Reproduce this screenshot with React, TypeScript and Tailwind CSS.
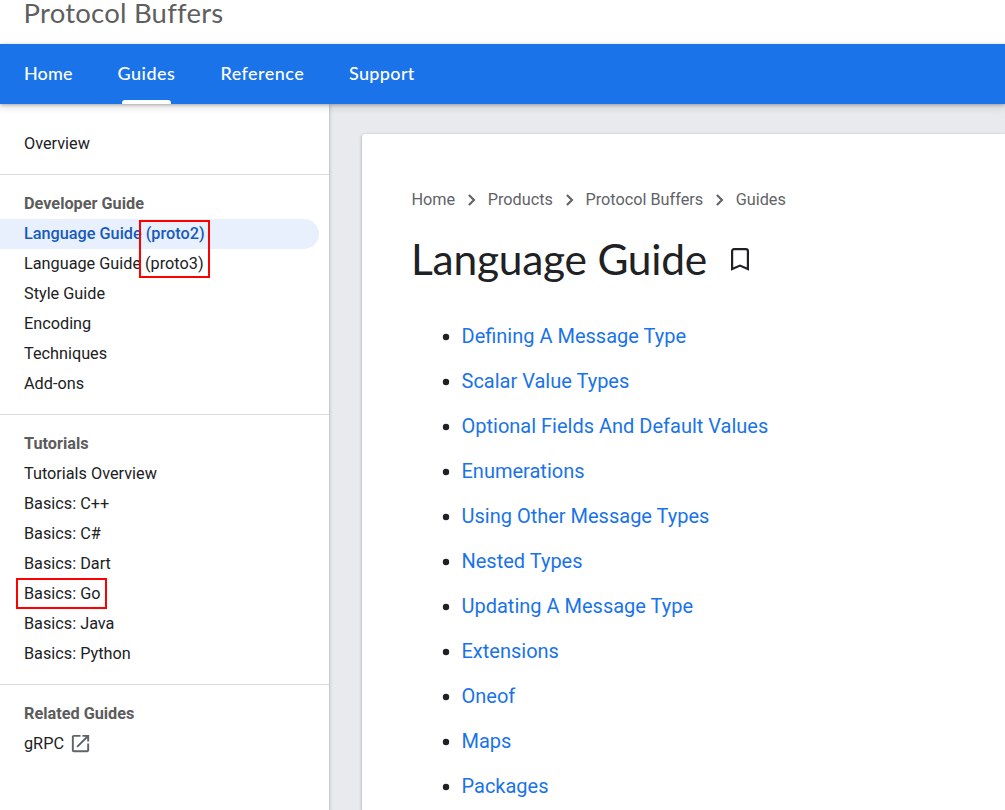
import React from "react";

type NavItem = { label: string; active?: boolean; external?: boolean; marked?: boolean };
type Section = { title?: string; items: NavItem[] };

const tabs = [
  { label: "Home", box: "w-[93.5px]", text: "tracking-[0.1px]" },
  { label: "Guides", box: "w-[103px]", text: "tracking-[0.5px]", active: true },
  { label: "Reference", box: "w-[128.5px]", text: "tracking-[0.45px]" },
  { label: "Support", box: "w-[110px]", text: "tracking-[0.35px]" },
];

const sections: Section[] = [
  { items: [{ label: "Overview" }] },
  {
    title: "Developer Guide",
    items: [
      { label: "Language Guide (proto2)", active: true },
      { label: "Language Guide (proto3)" },
      { label: "Style Guide" },
      { label: "Encoding" },
      { label: "Techniques" },
      { label: "Add-ons" },
    ],
  },
  {
    title: "Tutorials",
    items: [
      { label: "Tutorials Overview" },
      { label: "Basics: C++" },
      { label: "Basics: C#" },
      { label: "Basics: Dart" },
      { label: "Basics: Go", marked: true },
      { label: "Basics: Java" },
      { label: "Basics: Python" },
    ],
  },
  { title: "Related Guides", items: [{ label: "gRPC", external: true }] },
];

const crumbs = ["Home", "Products", "Protocol Buffers", "Guides"];

const topics = [
  "Defining A Message Type",
  "Scalar Value Types",
  "Optional Fields And Default Values",
  "Enumerations",
  "Using Other Message Types",
  "Nested Types",
  "Updating A Message Type",
  "Extensions",
  "Oneof",
  "Maps",
  "Packages",
];

function Header() {
  return (
    <header className="relative z-10 shrink-0 font-['Lato',sans-serif]">
      <div className="flex h-[44px] items-start bg-white pl-[23.5px]">
        <span className="text-[27.5px] leading-[26px] tracking-[0.22px] whitespace-nowrap text-[#5f5f5f]">Protocol Buffers</span>
      </div>
      <nav className="flex h-[60px] bg-[#1a73e8] pl-[1px] shadow-[0_1px_3px_rgba(60,64,67,0.35),0_3px_8px_rgba(60,64,67,0.18)]">
        {tabs.map((t) => (
          <a key={t.label} className={`relative flex items-center pb-[2px] pl-[23px] text-[18px] font-medium text-white ${t.box}`}>
            <span className={t.text}>{t.label}</span>
            {t.active && <span className="absolute bottom-0 left-[27.5px] h-1 w-[49px] rounded-t-[3px] bg-white" />}
          </a>
        ))}
      </nav>
    </header>
  );
}

function Row({ item }: { item: NavItem }) {
  return (
    <li
      className={`relative mr-[10px] flex h-[30px] items-center pl-6 ${
        item.active ? "rounded-r-full bg-[#e8f0fe] font-medium text-[#185abc]" : "text-[#202124]"
      }`}
    >
      <a>{item.label}</a>
      {item.active && <span className="absolute top-[1px] left-[139px] z-10 h-[58px] w-[71px] border-2 border-[#f00]" />}
      {item.marked && <span className="absolute -top-[1px] left-4 h-[31px] w-[91px] border-2 border-[#f00]" />}
      {item.external && (
        <svg viewBox="0 0 24 24" className="-mt-[1px] ml-[5px] size-[23px]" fill="#5f6368">
          <path d="M19 19H5V5h7V3H5a2 2 0 0 0-2 2v14a2 2 0 0 0 2 2h14c1.1 0 2-.9 2-2v-7h-2v7zM14 3v2h3.59l-9.83 9.83 1.41 1.41L19 6.41V10h2V3h-7z" />
        </svg>
      )}
    </li>
  );
}

function Sidebar() {
  return (
    <aside className="w-[329px] shrink-0 bg-white pt-[10px] text-[16.25px] shadow-[0_1px_2px_rgba(60,64,67,0.3),0_1px_4px_1px_rgba(60,64,67,0.15)]">
      {sections.map((s, i) => (
        <ul key={i} className={i ? "border-t border-[#dadce0] pt-[14px] pb-[15px]" : "pt-[15px] pb-[15px]"}>
          {s.title && <li className="flex h-[30px] items-center pl-6 font-bold text-[#5c5c5c]">{s.title}</li>}
          {s.items.map((item) => (
            <Row key={item.label} item={item} />
          ))}
        </ul>
      ))}
    </aside>
  );
}

function Article() {
  return (
    <main className="min-w-0 flex-1 pt-[30px] pl-[33px]">
      <article className="h-full rounded-tl-[3px] bg-white pt-[51px] pl-[49.5px] shadow-[0_1px_2px_rgba(60,64,67,0.3),0_1px_3px_1px_rgba(60,64,67,0.15)]">
        <div className="flex h-[30px] items-center text-[16.25px] text-[#5f6368]">
          {crumbs.map((c, i) => (
            <React.Fragment key={c}>
              {i > 0 && (
                <svg viewBox="0 0 32.5 20" className="h-5 w-[32.5px]" fill="none" stroke="#5f6368" strokeWidth="2.1">
                  <path d="M13.9 4.9l5.1 5.1-5.1 5.1" />
                </svg>
              )}
              <span>{c}</span>
            </React.Fragment>
          ))}
        </div>
        <div className="mt-[19px] flex h-[50px] items-center text-[#202124]">
          <h1 className="-ml-[0.5px] w-[320px] font-['Lato',sans-serif] text-[42.5px] leading-[50px] tracking-[-0.25px] whitespace-nowrap">Language Guide</h1>
          <svg viewBox="0 0 18 23" className="mt-[1px] h-[23px] w-[18px]" fill="none" stroke="#202124" strokeWidth="2.2">
            <path d="M1.1 21V3.1a2 2 0 0 1 2-2h11.8a2 2 0 0 1 2 2V21L9 17.6z" />
          </svg>
        </div>
        <ul className="mt-[37px] flex flex-col gap-[15px] text-xl text-[#1a73e8]">
          {topics.map((t) => (
            <li key={t} className="flex h-[30px] items-center">
              <svg viewBox="0 0 8 8" className="mt-[2px] mr-[11.5px] ml-[30.5px] size-2" fill="#202124">
                <circle cx="4" cy="4" r="3.2" />
              </svg>
              <a>{t}</a>
            </li>
          ))}
        </ul>
      </article>
    </main>
  );
}

export default function App() {
  return (
    <div className="flex h-[810px] w-[1005px] flex-col overflow-hidden bg-[#e8eaed] font-['Roboto',sans-serif]">
      <Header />
      <div className="flex min-h-0 flex-1">
        <Sidebar />
        <Article />
      </div>
    </div>
  );
}
